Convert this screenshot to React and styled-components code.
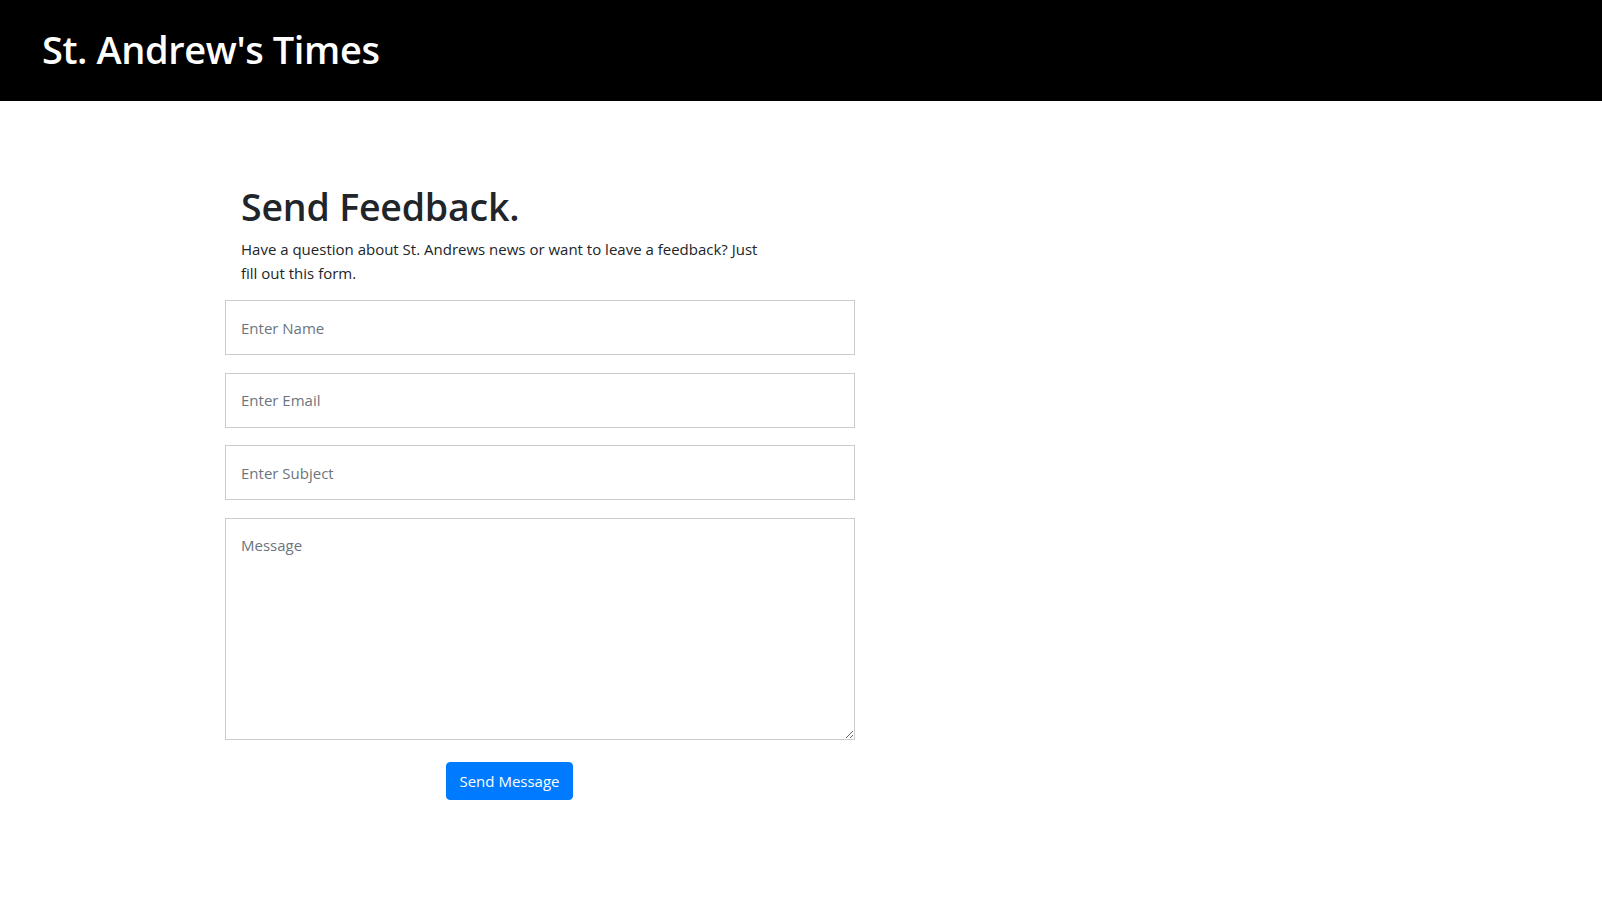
import React from "react";
import styled, { createGlobalStyle } from "styled-components";

const Global = createGlobalStyle`
  html, body { margin: 0; padding: 0; background: #fff; }
  body {
    font-family: "Open Sans", "Noto Sans", "DejaVu Sans", sans-serif;
    color: #212529;
  }
  * { box-sizing: border-box; }
`;

const Header = styled.header`
  background: #000;
  height: 101px;
  display: flex;
  align-items: center;
  padding-left: 42px;
`;

const Brand = styled.h1`
  margin: 0 0 2px;
  color: #fff;
  font-size: 38px;
  font-weight: 600;
  line-height: 1.2;
  letter-spacing: -0.4px;
`;

const Main = styled.main`
  padding: 83px 0 80px 225px;
`;

const Intro = styled.div`
  padding-left: 16px;
  margin-bottom: 15px;
`;

const Title = styled.h2`
  margin: 0 0 8px;
  font-size: 37.5px;
  font-weight: 600;
  line-height: 1.2;
  letter-spacing: -0.2px;
  color: #212529;
`;

const Lead = styled.p`
  margin: 0;
  font-size: 15px;
  line-height: 24px;
  width: 530px;
  color: #212529;
`;

const Form = styled.form`
  width: 630px;
  display: flex;
  flex-direction: column;
  gap: 17.5px;
`;

const Field = styled.input`
  width: 100%;
  height: 55px;
  border: 1px solid #cccccc;
  border-radius: 0;
  padding: 0 15px;
  font-family: inherit;
  font-size: 15px;
  color: #495057;
  outline: none;
  &::placeholder { color: #6c757d; }
`;

const Area = styled.textarea`
  width: 100%;
  height: 222px;
  border: 1px solid #cccccc;
  border-radius: 0;
  padding: 14px 15px;
  font-family: inherit;
  font-size: 15px;
  line-height: 24px;
  color: #495057;
  outline: none;
  &::placeholder { color: #6c757d; }
`;

const Actions = styled.div`
  padding-left: 221px;
  margin-top: 5px;
`;

const Button = styled.button`
  height: 38px;
  width: 127px;
  background: #007bff;
  border: 1px solid #007bff;
  border-radius: 4px;
  color: #fff;
  font-family: inherit;
  font-size: 15px;
  padding: 0 12px;
  cursor: pointer;
`;

export default function App() {
  return (
    <>
      <Global />
      <Header>
        <Brand>St. Andrew's Times</Brand>
      </Header>
      <Main>
        <Intro>
          <Title>Send Feedback.</Title>
          <Lead>
            Have a question about St. Andrews news or want to leave a feedback? Just fill out this form.
          </Lead>
        </Intro>
        <Form onSubmit={(e) => e.preventDefault()}>
          <Field type="text" placeholder="Enter Name" />
          <Field type="email" placeholder="Enter Email" />
          <Field type="text" placeholder="Enter Subject" />
          <Area placeholder="Message" />
          <Actions>
            <Button type="submit">Send Message</Button>
          </Actions>
        </Form>
      </Main>
    </>
  );
}
